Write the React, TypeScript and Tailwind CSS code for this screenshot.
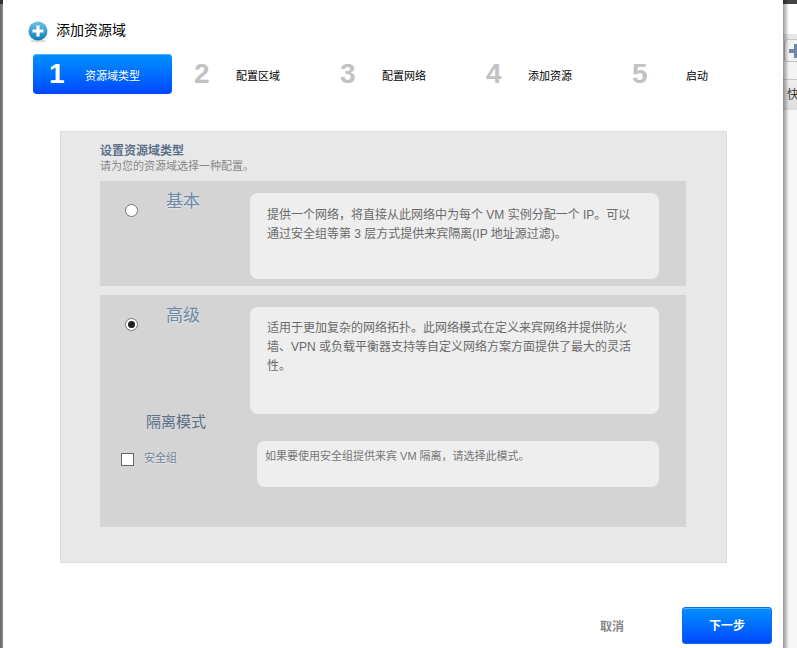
const FONT = "font-['Liberation_Sans','Noto_Sans_CJK_SC',sans-serif]";

const STEPS = [
  { num: "1", label: "资源域类型" },
  { num: "2", label: "配置区域" },
  { num: "3", label: "配置网络" },
  { num: "4", label: "添加资源" },
  { num: "5", label: "启动" },
];

function AddIcon() {
  return (
    <svg width="20" height="22" viewBox="0 0 20 22" className="shrink-0">
      <defs>
        <linearGradient id="add-bg" x1="0" y1="0" x2="0" y2="1">
          <stop offset="0" stopColor="#6cc3e6" />
          <stop offset="1" stopColor="#0b7fb8" />
        </linearGradient>
      </defs>
      <ellipse cx="10" cy="20" rx="8" ry="1.5" fill="#dddddd" />
      <circle cx="10" cy="10" r="9.5" fill="url(#add-bg)" />
      <path d="M8.4 4.5h3.2v3.9h3.9v3.2h-3.9v3.9H8.4v-3.9H4.5V8.4h3.9z" fill="#ffffff" />
    </svg>
  );
}

function Radio({ checked }: { checked?: boolean }) {
  return (
    <span className="flex size-[13px] items-center justify-center rounded-full border border-[#777777] bg-white">
      {checked && <span className="size-[7px] rounded-full bg-[#222222]" />}
    </span>
  );
}

function Steps() {
  return (
    <div className="ml-[30px] mt-[11px] flex h-10">
      {STEPS.map((step, i) => (
        <div
          key={step.num}
          className={
            i === 0
              ? "flex w-[139px] items-center rounded-[4px] bg-gradient-to-b from-[#0090ff] to-[#0044ff] pl-[16px] text-white [box-shadow:inset_0_1px_0_#4fb0ff]"
              : "ml-[7px] flex w-[139px] items-center pl-[15px] text-[#c2c2c2]"
          }
        >
          <span className="mt-[-1px] w-[36px] text-[28px] font-bold leading-none">{step.num}</span>
          <span
            className={
              i === 0
                ? "mt-[4px] text-[11px] text-white"
                : i === 4
                  ? "ml-[18px] mt-[4px] text-[11px] text-black"
                  : "ml-[6px] mt-[4px] text-[11px] text-black"
            }
          >
            {step.label}
          </span>
        </div>
      ))}
    </div>
  );
}

// the page behind the dialog, only a sliver of it shows on the right
function RightSliver() {
  return (
    <div className="relative w-[14px] shrink-0 overflow-hidden bg-[#f6f6f6]">
      <div className="h-[4px] bg-[#444444]" />
      <div className="h-[30px] bg-white" />
      <div className="h-[5px] bg-[#e8e8e8]" />
      <div className="ml-[1px] flex h-[23px] items-center rounded-l-[4px] border border-r-0 border-[#c4c4c4] bg-[#f2f2f2] pl-[4px]">
        <svg width="14" height="14" viewBox="0 0 14 14" className="shrink-0">
          <path d="M5 0h4v5h5v4H9v5H5V9H0V5h5z" fill="#6f88a8" />
        </svg>
      </div>
      <div className="h-[17px] bg-[#f4f4f4]" />
      <div className="flex h-[31px] items-center border-t border-[#c8c8c8] bg-gradient-to-b from-[#eeeeee] to-[#dddddd] pl-[4px] text-[12px] text-[#333333]">
        <span className="shrink-0">快</span>
      </div>
      <div className="absolute inset-y-0 left-0 w-[6px] bg-gradient-to-r from-[#00000066] to-transparent" />
    </div>
  );
}

export default function App() {
  return (
    <div className={`${FONT} flex h-[648px] w-[797px] overflow-hidden bg-white`}>
      <div className="w-[3px] shrink-0 bg-gradient-to-r from-[#666666] to-[#8a8a8a]">
        <div className="h-[4px] bg-[#333333]" />
      </div>

      <div className="flex w-[780px] shrink-0 flex-col bg-white">
        <div className="ml-[25px] mt-[21px] flex h-[22px] items-start gap-[8px]">
          <AddIcon />
          <span className="text-[14px] leading-[19px] text-black">添加资源域</span>
        </div>

        <Steps />

        <div className="ml-[57px] mt-[37px] h-[432px] w-[667px] border border-[#dddddd] bg-[#e8e8e8] pl-[39px] pt-[12px]">
          <div className="text-[12px] font-bold leading-[14px] text-[#5a7088]">设置资源域类型</div>
          <div className="mt-[2px] text-[11px] leading-[13px] text-[#888888]">请为您的资源域选择一种配置。</div>

          <div className="mt-[8px] flex h-[105px] w-[586px] items-start bg-[#d4d4d4] pt-[12px]">
            <div className="ml-[25px] mt-[11px]">
              <Radio />
            </div>
            <div className="ml-[28px] mt-[1px] text-[17px] leading-[16px] text-[#6c8aa6] [text-shadow:0_1px_2px_#eeeeee]">基本</div>
            <div className="ml-[50px] h-[86px] w-[409px] rounded-[8px] bg-[#eeeeee] px-[17px] pt-[13px] text-[12px] leading-[19px] text-[#6a6a6a]">
              提供一个网络，将直接从此网络中为每个 VM 实例分配一个 IP。可以通过安全组等第 3 层方式提供来宾隔离(IP 地址源过滤)。
            </div>
          </div>

          <div className="mt-[9px] h-[232px] w-[586px] bg-[#d4d4d4] pt-[12px]">
            <div className="flex items-start">
              <div className="ml-[25px] mt-[11px]">
                <Radio checked />
              </div>
              <div className="ml-[28px] mt-[1px] text-[17px] leading-[16px] text-[#6c8aa6] [text-shadow:0_1px_2px_#eeeeee]">高级</div>
              <div className="ml-[50px] h-[107px] w-[409px] rounded-[8px] bg-[#eeeeee] px-[17px] pt-[12px] text-[12px] leading-[19px] text-[#6a6a6a]">
                适用于更加复杂的网络拓扑。此网络模式在定义来宾网络并提供防火墙、VPN 或负载平衡器支持等自定义网络方案方面提供了最大的灵活性。
              </div>
            </div>
            <div className="ml-[46px] mt-[-1px] text-[15px] leading-[18px] text-[#5a7088]">隔离模式</div>
            <div className="mt-[10px] flex items-start">
              <span className="ml-[21px] mt-[12px] size-[13px] border border-[#666666] bg-white" />
              <span className="ml-[10px] mt-[10px] text-[11px] leading-[15px] text-[#6f8296] [text-shadow:0_1px_2px_#eeeeee]">安全组</span>
              <div className="ml-[80px] h-[46px] w-[402px] rounded-[8px] bg-[#eeeeee] pl-[8px] pt-[8px] text-[11px] leading-[14px] text-[#777777]">
                如果要使用安全组提供来宾 VM 隔离，请选择此模式。
              </div>
            </div>
          </div>
        </div>

        <div className="mt-[44px] flex items-start">
          <span className="ml-[597px] mt-[12px] text-[12px] font-bold leading-[16px] text-[#888888]">取消</span>
          <div className="ml-[58px] flex h-[37px] w-[90px] items-center justify-center rounded-[3px] border border-[#0a6fe8] bg-gradient-to-b from-[#0090ff] to-[#0044ff] text-[12px] font-bold text-white [box-shadow:inset_0_1px_0_#4fb0ff]">
            下一步
          </div>
        </div>
      </div>

      <RightSliver />
    </div>
  );
}
